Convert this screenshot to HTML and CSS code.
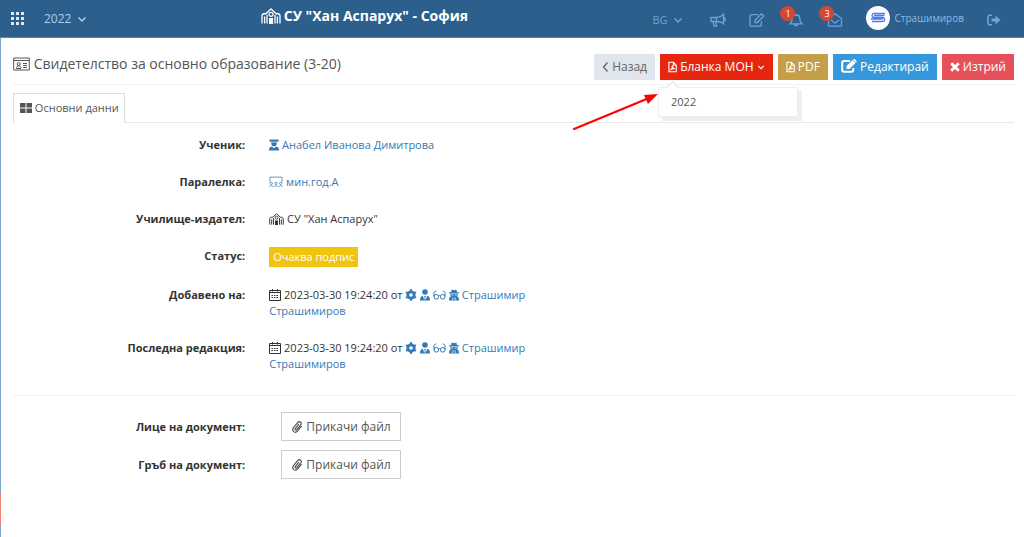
FILE: index.html
```html
<!DOCTYPE html>
<html lang="bg">
<head>
  <meta charset="UTF-8">
  <meta name="viewport" content="width=device-width, initial-scale=1">
  <title>Свидетелство за основно образование (3-20)</title>
  <link rel="stylesheet" href="styles.css">
</head>
<body>
  <!-- icon set -->
  <svg class="sprite" aria-hidden="true">
    <symbol id="i-grid" viewBox="0 0 13 13"><path fill="currentColor" d="M0 0h3v3H0zM5 0h3v3H5zM10 0h3v3h-3zM0 5h3v3H0zM5 5h3v3H5zM10 5h3v3h-3zM0 10h3v3H0zM5 10h3v3H5zM10 10h3v3h-3z"/></symbol>
    <symbol id="i-down" viewBox="0 0 10 10"><path class="s" stroke-width="1.500" d="M1.500 3.500 5 7l3.500-3.500"/></symbol>
    <symbol id="i-left" viewBox="0 0 7 12"><path class="s" stroke-width="1.300" d="M5.500 1.500 1.500 6l4 4.500"/></symbol>
    <symbol id="i-school" viewBox="0 0 20 16"><path class="s" stroke-width="1.300" d="M1 15.500V8C1 6.500 2.200 5.500 4.500 5.500M19 15.500V8c0-1.500-1.200-2.500-3.500-2.500M3.600 8.500v7M16.400 8.500v7M6 15.500V6.800M14 15.500V6.800M4.300 6.200 10 1l5.700 5.200"/><circle class="s" stroke-width="1.200" cx="10" cy="6.300" r="2"/><path fill="currentColor" d="M8 10h4v6H8z"/></symbol>
    <symbol id="i-horn" viewBox="0 0 16 14"><path class="s" stroke-width="1.300" d="M1 4.500h5.500C9.500 4.500 12 3 13.500 1.200v9.600C12 9 9.500 8.500 6.500 8.500H1zM6.500 4.500v4M3 8.500l1 4.500h2.500L5.500 8.500M13.500 5h1.500v2.500h-1.500"/></symbol>
    <symbol id="i-pen" viewBox="0 0 16 14"><path class="s" stroke-width="1.300" d="M9.500 1.700H2.200C1.500 1.700 1 2.200 1 2.900v9c0 .7.500 1.200 1.200 1.200h9c.7 0 1.200-.5 1.200-1.200V8.500M6 9.500V7.200L12.500.8l2.300 2.200L8.300 9.500z"/></symbol>
    <symbol id="i-edit" viewBox="0 0 16 14"><path class="s" stroke-width="2" d="M9 2H3C2 2 1.200 2.600 1.200 3.700V11c0 1 .8 1.800 1.800 1.800h7.500c1 0 1.800-.8 1.800-1.800V9"/><path fill="currentColor" d="M5.500 7 11.500 1l3 3-6 6h-3zM12.300.3c.5-.5 1-.4 1.500 0l1.600 1.600c.4.4.4 1 0 1.400l-.4.4-3-3z"/></symbol>
    <symbol id="i-bell" viewBox="0 0 14 14"><path class="s" stroke-width="1.300" d="M1.200 10.800C2.600 9.500 3.200 8 3.200 5.500 3.200 3.300 4.900 2 7 2s3.800 1.300 3.800 3.500c0 2.500.6 4 2 5.300zM7 2V.7M5.300 11.200c.3 2.300 3.100 2.300 3.400 0"/></symbol>
    <symbol id="i-mail" viewBox="0 0 15 14"><path class="s" stroke-width="1.300" d="M1 5.500 7.500.8 14 5.500v6.700c0 .6-.4 1-1 1H2c-.6 0-1-.4-1-1zM3.500 7l4 3.200L11.500 7"/></symbol>
    <symbol id="i-exit" viewBox="0 0 14 12"><path class="s" stroke-width="1.600" d="M5 1.200H2.800C1.800 1.200 1 2 1 3v6c0 1 .8 1.800 1.800 1.800H5"/><path fill="currentColor" d="M4.500 4.500h4V1.500L13.500 6l-5 4.500v-3h-4z"/></symbol>
    <symbol id="i-card" viewBox="0 0 17 14"><path class="s" stroke-width="1" d="M.7 1h15.600v12H.7zM.7 3.500h15.600M3.500 11.500c0-1.800.7-2.500 2.200-2.500s2.200.7 2.200 2.500zM10 6.500h4M10 8.500h4M10 10.500h4"/><circle class="s" cx="5.700" cy="7" r="1.500"/></symbol>
    <symbol id="i-tiles" viewBox="0 0 12 10"><path fill="currentColor" d="M0 0h5.500v4.500H0zM6.500 0H12v4.500H6.500zM0 5.500h5.500V10H0zM6.500 5.500H12V10H6.500z"/></symbol>
    <symbol id="i-pdf" viewBox="0 0 10 12"><path class="s" stroke-width="1.200" d="M1 .8h5L9.200 4v7.200H1zM6 .8V4h3.200M2.500 9.500C4 8.500 5 6.500 4.700 4.500 5 7 6 8 7.800 8 6 7.500 4 8 2.500 9.500z"/></symbol>
    <symbol id="i-cross" viewBox="0 0 10 10"><path class="s" stroke-width="2.800" d="m1.200 1.200 7.600 7.600M8.800 1.200 1.200 8.800"/></symbol>
    <symbol id="i-student" viewBox="0 0 11 12"><path fill="currentColor" d="M.5 0h10v2.200l-2 .5v1.800C8.500 6 7 7.500 5.500 7.500s-3-1.500-3-3V2.700l-2-.5zM0 12c0-2.500.8-4 2.800-4.300L5.500 9.500l2.700-1.800C10.200 8 11 9.500 11 12z"/><path stroke="#fff" stroke-width=".7" d="M2 2.800h7"/></symbol>
    <symbol id="i-class" viewBox="0 0 15 12"><path class="s" stroke-width=".8" d="M1 6V.8h13V6M.7 11.500c0-2.200 3.600-2.200 3.600 0M5.700 11.500c0-2.200 3.600-2.200 3.600 0M10.700 11.500c0-2.200 3.600-2.200 3.600 0"/><g class="s" stroke-width=".8"><circle cx="2.500" cy="7.500" r="1.200"/><circle cx="7.500" cy="7.500" r="1.200"/><circle cx="12.500" cy="7.500" r="1.200"/></g></symbol>
    <symbol id="i-cal" viewBox="0 0 12 12"><path class="s" stroke-width="1" d="M.5 1.500h11v10H.5zM.5 3.500h11M3.500 0v2.500M8.500 0v2.500"/><path class="s" stroke-width="1" stroke-dasharray="1.500 1" d="M2.500 6.500h7M2.500 8.500h7"/></symbol>
    <symbol id="i-gear" viewBox="0 0 12 12"><circle class="s" stroke-width="2.800" cx="6" cy="6" r="3.200"/><path class="s" stroke-width="2.200" d="M6 .3v2M6 9.700v2M1.100 3.100l1.700 1M9.200 7.900l1.700 1M10.900 3.100l-1.700 1M2.800 7.900l-1.700 1"/></symbol>
    <symbol id="i-tie" viewBox="0 0 10 12"><circle fill="currentColor" cx="5" cy="3" r="2.800"/><path fill="currentColor" d="M0 11.500C0 8.500.8 7 2.800 6.700L4.300 11l.4-2.700L4 7h2l-.7 1.300.4 2.700 1.500-4.300C9.200 7 10 8.500 10 11.500z"/></symbol>
    <symbol id="i-glasses" viewBox="0 0 13 10"><g class="s" stroke-width="1"><circle cx="3.300" cy="6.800" r="2.300"/><circle cx="9.700" cy="6.800" r="2.300"/><path d="M5.500 6c.5-.7 1.500-.7 2 0M1 6.500 1 3C1 1.800 2 1 3.300 1M12 6.500V3c0-1.200-1-2-2.300-2"/></g></symbol>
    <symbol id="i-spy" viewBox="0 0 11 12"><path fill="currentColor" d="M3 0 5.500.7 8 0l.8 2.800 2.200.5v1H0v-1l2.200-.5zM1.500 5h8v1.800l-1 .7c2 .5 2.500 2 2.500 4.500H0C0 9.500.5 8 2.500 7.500l-1-.7z"/><path stroke="#fff" stroke-width=".8" d="M2.500 6h2.200M6.300 6h2.200M4.500 8.500l-.6 3M6.500 8.500l.6 3"/></symbol>
    <symbol id="i-clip" viewBox="0 0 12 13"><path class="s" stroke-width="1.300" d="M8 3.500 4.200 8.200c-.8 1.200.8 2.200 1.600 1.200l4.300-5.200c1.700-2.400-1.400-4.800-3.200-2.600L2.200 7.200c-2.500 3.500 1.700 6.700 4.300 3.700l4.500-5.400"/></symbol>
  </svg>

  <header class="topbar">
    <a href="#" class="apps" aria-label="Меню"><svg class="icon i13"><use href="#i-grid"/></svg></a>
    <a href="#" class="year">2022 <svg class="icon i10"><use href="#i-down"/></svg></a>
    <h1 class="school"><svg class="icon w20"><use href="#i-school"/></svg> СУ "Хан Аспарух" - София</h1>
    <nav class="tools">
      <a href="#" class="lang">BG <svg class="icon i10"><use href="#i-down"/></svg></a>
      <a href="#" aria-label="Новини"><svg class="icon w16"><use href="#i-horn"/></svg></a>
      <a href="#" aria-label="Бележки"><svg class="icon w16"><use href="#i-pen"/></svg></a>
      <a href="#" class="notify" aria-label="Известия"><svg class="icon w16"><use href="#i-bell"/></svg><span class="count">1</span></a>
      <a href="#" class="notify" aria-label="Съобщения"><svg class="icon w16"><use href="#i-mail"/></svg><span class="count">3</span></a>
      <a href="#" class="user">
        <svg class="avatar" viewBox="0 0 24 24"><circle cx="12" cy="12" r="12" fill="#fff"/><g fill="none" stroke="#4c7df0" stroke-width="1.300"><path d="M19 7.500H8c-2.500 0-2.500 4 0 4h8c1 0 1 1.500 0 1.500H5M18.500 9.500H8M16 11.500c3.500 0 3.500 4 0 4H6"/></g></svg>
        Страшимиров
      </a>
      <a href="#" aria-label="Изход"><svg class="icon w14"><use href="#i-exit"/></svg></a>
    </nav>
  </header>

  <main class="page">
    <div class="page-head">
      <h2><svg class="icon w17"><use href="#i-card"/></svg> Свидетелство за основно образование (3-20)</h2>
      <div class="actions">
        <button class="btn default"><svg class="icon w7"><use href="#i-left"/></svg> Назад</button>
        <div class="dropdown">
          <button class="btn red" aria-expanded="true"><svg class="icon w9"><use href="#i-pdf"/></svg> Бланка МОН <svg class="icon w8"><use href="#i-down"/></svg></button>
          <div class="menu"><a href="#">2022</a></div>
          <svg class="pointer" viewBox="0 0 86 38"><path d="M1 36 76 5" stroke="#f00" stroke-width="2" stroke-linecap="round"/><path d="M85 1 75 11 71 2z" fill="#f00"/></svg>
        </div>
        <button class="btn gold"><svg class="icon w9"><use href="#i-pdf"/></svg> PDF</button>
        <button class="btn blue"><svg class="icon w16"><use href="#i-edit"/></svg> Редактирай</button>
        <button class="btn danger"><svg class="icon i10"><use href="#i-cross"/></svg> Изтрий</button>
      </div>
    </div>

    <div class="tabs"><a href="#" class="tab"><svg class="icon w12"><use href="#i-tiles"/></svg> Основни данни</a></div>

    <dl class="details">
      <dt>Ученик:</dt>
      <dd><a href="#"><svg class="icon w10"><use href="#i-student"/></svg> Анабел Иванова Димитрова</a></dd>
      <dt>Паралелка:</dt>
      <dd><a href="#"><svg class="icon w14"><use href="#i-class"/></svg> мин.год.А</a></dd>
      <dt>Училище-издател:</dt>
      <dd><svg class="icon w15"><use href="#i-school"/></svg> СУ "Хан Аспарух"</dd>
      <dt>Статус:</dt>
      <dd><span class="badge">Очаква подпис</span></dd>
      <dt>Добавено на:</dt>
      <dd><svg class="icon w12"><use href="#i-cal"/></svg> 2023-03-30 19:24:20 от <a href="#"><svg class="icon w12"><use href="#i-gear"/></svg> <svg class="icon w10"><use href="#i-tie"/></svg> <svg class="icon w13"><use href="#i-glasses"/></svg> <svg class="icon w10"><use href="#i-spy"/></svg> Страшимир Страшимиров</a></dd>
      <dt>Последна редакция:</dt>
      <dd><svg class="icon w12"><use href="#i-cal"/></svg> 2023-03-30 19:24:20 от <a href="#"><svg class="icon w12"><use href="#i-gear"/></svg> <svg class="icon w10"><use href="#i-tie"/></svg> <svg class="icon w13"><use href="#i-glasses"/></svg> <svg class="icon w10"><use href="#i-spy"/></svg> Страшимир Страшимиров</a></dd>
    </dl>

    <div class="uploads">
      <label for="front">Лице на документ:</label>
      <button id="front" class="attach"><svg class="icon w12"><use href="#i-clip"/></svg> Прикачи файл</button>
      <label for="back">Гръб на документ:</label>
      <button id="back" class="attach"><svg class="icon w12"><use href="#i-clip"/></svg> Прикачи файл</button>
    </div>
  </main>
</body>
</html>
```
FILE: styles.css
```css
:root { --font: "Open Sans", sans-serif; --bar: #2c5f8c; --link: #337ab7; --muted: #6ba3da; --line: #eef1f5; }
* { box-sizing: border-box; }
body { margin: 0; min-height: 100vh; font: 11px/16px var(--font); color: #333; background: #fff; display: flex; flex-direction: column; }
a { color: var(--link); text-decoration: none; }
.sprite { display: none; }
.s { fill: none; stroke: currentColor; }

.icon { width: 12px; height: 12px; vertical-align: -2px; flex: none; }
.w7 { width: 7px; }
.w8 { width: 8px; }
.w9 { width: 9px; }
.i10 { width: 10px; height: 10px; vertical-align: -1px; }
.w10 { width: 10px; }
.w12 { width: 12px; }
.i13 { width: 13px; height: 13px; }
.w13 { width: 13px; }
.w14 { width: 14px; }
.w15 { width: 15px; }
.w16 { width: 16px; height: 14px; }
.w17 { width: 17px; height: 14px; }
.w20 { width: 20px; height: 16px; }

/* top bar */
.topbar { height: 38px; display: flex; align-items: center; padding: 0 23px 0 11px; background: var(--bar); border-bottom: 1px solid #5b87ae; }
.topbar a { color: var(--muted); display: flex; align-items: center; }
.topbar .apps { color: #dce8f3; }
.topbar .year { margin-left: 20px; gap: 6px; font-size: 12px; color: #a9cdec; }
.school { margin: 0 0 5px 17%; padding-left: 5px; display: flex; align-items: center; gap: 3px; font-size: 14px; line-height: 20px; font-weight: 700; color: #fff; }
.tools { margin-left: auto; padding-top: 2px; display: flex; align-items: center; gap: 23px; }
.topbar .lang { gap: 6px; margin-right: 4px; }
.notify { position: relative; }
.count { position: absolute; left: -8px; top: -7px; width: 15px; height: 15px; border-radius: 50%; background: #d64635; color: #fff; font-size: 9px; line-height: 15px; text-align: center; }
.topbar .user { gap: 4px; margin-bottom: 4px; font-size: 10px; color: #8fb9df; }
.avatar { width: 24px; height: 24px; }

/* page */
.page { position: relative; flex: 1; padding: 0 10px 0 12px; border-left: 1px solid #7ea6cd; }
.page::before { content: ""; position: absolute; left: -1px; bottom: 12px; width: 1px; height: 32px; background: #f08072; }
.page-head { display: flex; justify-content: space-between; height: 47px; padding-top: 11px; border-bottom: 1px solid var(--line); align-items: flex-start; }
.page-head h2 { margin: 0; padding-top: 5px; font-size: 14px; line-height: 20px; font-weight: 400; color: #555; }
.actions { display: flex; gap: 5px; padding-top: 5px; }
.btn { height: 26px; padding: 0 8px; border: 0; font: 12px/26px var(--font); color: #fff; cursor: pointer; white-space: nowrap; }
.default { background: #e1e5ec; color: #666; }
.red { background: #e7260f; }
.gold { background: #c49f47; }
.blue { background: #3598dc; }
.danger { background: #e7505a; }

.dropdown { position: relative; }
.menu { position: absolute; left: -2px; top: 33px; z-index: 2; width: 140px; padding: 6px 12px; background: #fff; border: 1px solid #eee; box-shadow: 4px 4px rgba(102, 102, 102, .1); }
.menu::before { content: ""; position: absolute; left: 9px; top: -5px; width: 8px; height: 8px; background: #fff; border: solid #ddd; border-width: 1px 0 0 1px; transform: rotate(45deg); }
.menu a { color: #555; }
.pointer { position: absolute; left: -87px; top: 39px; z-index: 3; width: 86px; height: 38px; }

.tabs { display: flex; margin-top: 8px; border-bottom: 1px solid #e9e9e9; }
.tab { padding: 6px 5px 7px 6px; margin-bottom: -1px; border: 1px solid #ddd; border-bottom: 0; background: #fff; color: #555; }

.details, .uploads { display: grid; grid-template-columns: 23.2% 27%; column-gap: 24px; }
.details { margin: 0; padding: 14px 0 23px; row-gap: 21px; align-items: center; border-bottom: 1px solid var(--line); }
dt, label { font-weight: 700; text-align: right; }
dt { align-self: start; }
dd { margin: 0; }
.badge { display: block; width: fit-content; margin: -1px 0; padding: 2px 4px; background: #f1c40f; color: #fff; }
.uploads { padding-top: 16px; row-gap: 9px; align-items: center; }
.attach { justify-self: start; height: 29px; margin-left: 12px; padding: 0 9px; border: 1px solid #ccc; background: #fff; color: #555; font: 12px/20px var(--font); cursor: pointer; }
```
